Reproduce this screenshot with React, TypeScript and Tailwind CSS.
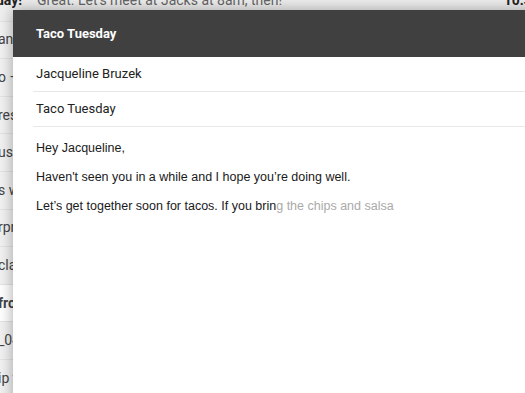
const rows = [
  { text: "ane Bruzek — Meeting notes from last week", bold: false },
  { text: "o – Can you send me the slides?", bold: false },
  { text: "res are attached for review", bold: false },
  { text: "us update on the project", bold: false },
  { text: "s way to go, thanks again", bold: false },
  { text: "rprise party on Friday", bold: false },
  { text: "class schedule for next term", bold: false },
  { text: "from the team — welcome aboard", bold: true },
  { text: "_0412.pdf shared with you", bold: false },
  { text: "ip to the mountains next month", bold: false },
];

function InboxRow({ text, bold }: { text: string; bold: boolean }) {
  return (
    <div
      className={`flex h-[37.6px] items-center border-b border-[#e4e4e4] text-[14px] text-[#444] ${
        bold ? "bg-white font-bold text-[#222]" : "bg-[#f2f2f2]"
      }`}
    >
      <span className="-ml-[2px] whitespace-nowrap">{text}</span>
    </div>
  );
}

export default function App() {
  return (
    <div className="relative h-[393px] w-[525px] overflow-hidden bg-white font-['Roboto',sans-serif]">
      <div className="-mt-[16px] flex flex-col">
        <div className="flex h-[37.6px] items-start border-b border-[#e4e4e4] bg-[#efefef] pt-[8px] text-[14px] leading-[16px]">
          <span className="-ml-[62px] w-[84px] whitespace-nowrap text-right font-bold text-[#222]">
            Tuesday!
          </span>
          <span className="ml-[15px] whitespace-nowrap text-[#666]">
            Great. Let's meet at Jacks at 8am, then!
          </span>
          <span className="-mr-[40px] ml-auto whitespace-nowrap font-bold text-[#222]">
            10:30 AM
          </span>
        </div>
        {rows.map((r) => (
          <InboxRow key={r.text} text={r.text} bold={r.bold} />
        ))}
      </div>

      <div className="absolute left-[13px] top-[10px] flex h-[400px] w-[540px] flex-col bg-white shadow-[0_0_14px_rgba(0,0,0,0.35)]">
        <div className="flex h-[47px] items-center bg-[#404040] px-[23px] text-[13px] font-bold text-white">
          Taco Tuesday
        </div>
        <div className="mx-[20px] flex h-[35px] items-center border-b border-[#e8e8e8] px-[3px] text-[13px] text-[#222]">
          Jacqueline Bruzek
        </div>
        <div className="mx-[20px] flex h-[35px] items-center border-b border-[#e8e8e8] px-[3px] text-[13px] text-[#222]">
          Taco Tuesday
        </div>
        <div className="px-[23px] pt-[7px] font-['Liberation_Sans',Arial,sans-serif] text-[12.5px] leading-[29px] text-[#1a1a1a]">
          <div>Hey Jacqueline,</div>
          <div>Haven't seen you in a while and I hope you’re doing well.</div>
          <div>
            Let’s get together soon for tacos. If you brin
            <span className="text-[#aaa]">g the chips and salsa</span>
          </div>
        </div>
      </div>
    </div>
  );
}
